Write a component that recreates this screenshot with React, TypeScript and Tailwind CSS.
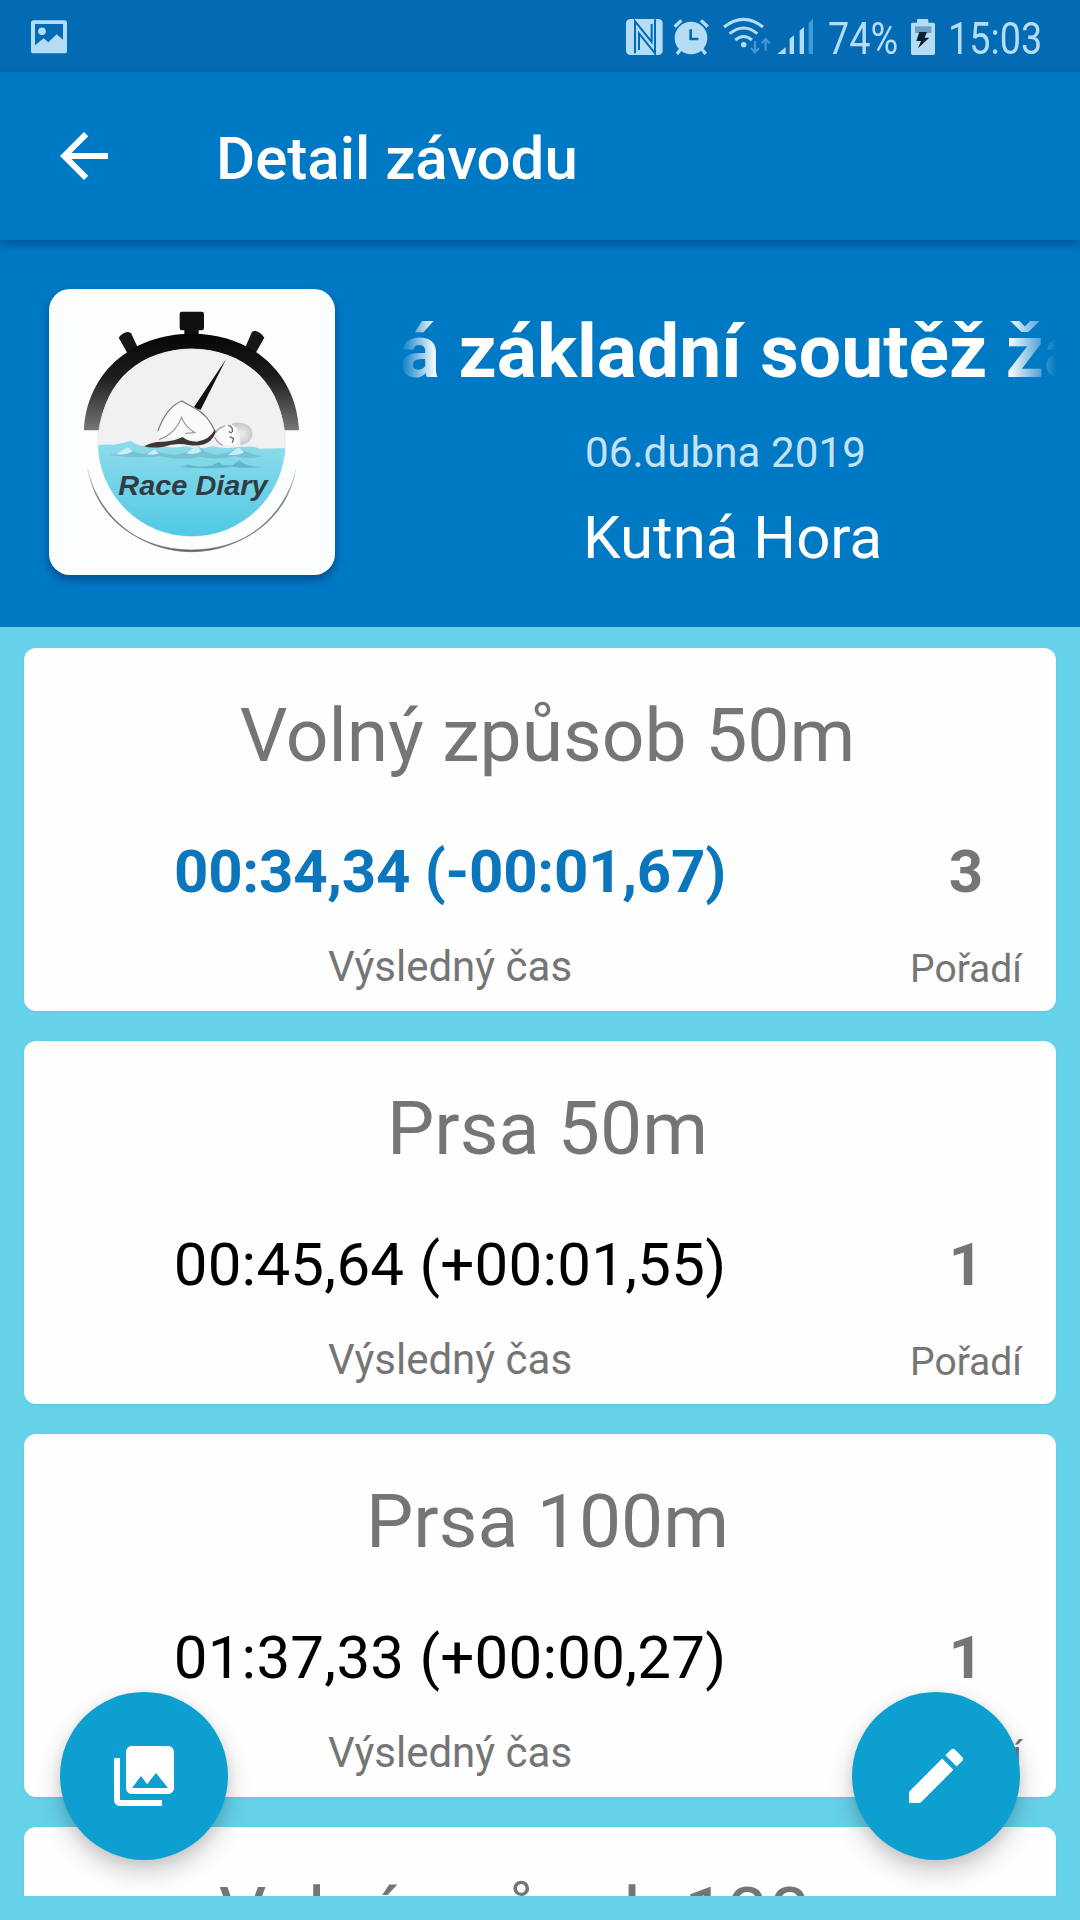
import type { ReactNode } from 'react'
import clsx from 'clsx'

type Result = {
  discipline: string
  time: string
  place: string
  best?: boolean
}

const results: Result[] = [
  { discipline: 'Volný způsob 50m', time: '00:34,34 (-00:01,67)', place: '3', best: true },
  { discipline: 'Prsa 50m', time: '00:45,64 (+00:01,55)', place: '1' },
  { discipline: 'Prsa 100m', time: '01:37,33 (+00:00,27)', place: '1' },
  { discipline: 'Volný způsob 100m', time: '01:18,52 (+00:00,84)', place: '2' },
]

const StatusBar = () => {
  return (
    <div className="flex h-[72px] items-start bg-[#036bb3] text-[#b5dcf5]">
      <svg className="mt-5 ml-[31px] h-[34px] w-9 shrink-0" viewBox="93 60 108 100" fill="currentColor">
        <path fillRule="evenodd" d="M101 60h92q8 0 8 8v83q0 8-8 8h-92q-8 0-8-8V68q0-8 8-8zM105 71v64l26-21 14 12 25-24 19 16V71z" />
        <circle cx="126" cy="93" r="11.5" />
      </svg>

      <svg className="mt-4 ml-[553px] h-10 w-[198px] shrink-0" viewBox="60 48 594 120" fill="currentColor">
        {/* NFC */}
        <rect x="78" y="57" width="110" height="108" rx="13" />
        <path d="M105 160V64l50 62V72M117 150V100l48 60V58" stroke="#036bb3" strokeWidth="6" fill="none" />
        {/* alarm */}
        <circle cx="273" cy="114" r="49" />
        <path d="M224 80l20-19M303 61l20 19M242 148l-11 14M306 148l11 14" stroke="currentColor" strokeWidth="10" fill="none" />
        <path d="M272 88v29h23" stroke="#036bb3" strokeWidth="8" fill="none" />
        {/* wifi */}
        <g fill="none" stroke="currentColor" strokeWidth="9">
          <path d="M372 81q59-46 117 0" />
          <path d="M389 101q42-34 83 0" />
          <path d="M406 120q25-21 50 0" />
        </g>
        <circle cx="431" cy="134" r="8" />
        <path d="M465 122v34m-12-12 12 13 12-13M497 152v-34m-12 12 12-13 12 13" stroke="#4095d2" strokeWidth="7" fill="none" />
        {/* signal */}
        <path d="M532 162l25-20v20zM569 116l13-10v56h-13zM599 92l13-11v81h-13z" />
        <path d="M626 69l13-13v106h-13z" fill="#3e9cd5" />
      </svg>

      <div className="mt-3 ml-[10px] w-[77px] shrink-0 text-[45px] leading-[54px]">
        <span className="inline-block origin-left scale-x-[0.84]">74%</span>
      </div>
      <svg className="mt-[19px] ml-[5px] h-9 w-[26px] shrink-0" viewBox="931 57 76 108" fill="currentColor">
        <path d="M937 68h14V60q0-3 4-3h26q4 0 4 3v8h15q5 0 5 5v87q0 5-5 5h-63q-4 0-4-5V73q0-5 4-5z" />
        <path d="M945 79h49v20h-49z" fill="#6f9fc4" />
        <path d="M958 96l-9 27h14l-9 22 34-32h-14l7-17z" fill="#0b1f33" />
      </svg>
      <div className="mt-3 ml-3 w-24 text-[45px] leading-[54px]">
        <span className="inline-block origin-left scale-x-[0.84]">15:03</span>
      </div>
    </div>
  )
}

const Toolbar = () => {
  return (
    <div className="relative flex h-[168px] items-center bg-[#0079c4] text-white shadow-[0_4px_10px_rgba(0,40,110,0.5)]">
      <svg className="ml-12 size-[72px]" viewBox="0 0 24 24" fill="currentColor">
        <path d="M20 11H7.83l5.59-5.59L12 4l-8 8 8 8 1.41-1.41L7.83 13H20v-2z" />
      </svg>
      <h1 className="ml-24 pt-[5px] text-[60px] leading-[72px] font-medium">Detail závodu</h1>
    </div>
  )
}

const Logo = () => {
  return (
    <div className="size-[286px] shrink-0 overflow-hidden rounded-[21px] bg-[#fcfdfd] shadow-[0_5px_8px_rgba(0,30,80,0.45)]">
      <svg className="size-full" viewBox="58 57 858 858">
        <defs>
          <linearGradient id="rim" x1="0" y1="0" x2="0" y2="1">
            <stop offset="0" stopColor="#050505" />
            <stop offset=".45" stopColor="#1d1d1f" />
            <stop offset="1" stopColor="#77777a" />
          </linearGradient>
          <linearGradient id="water" x1="0" y1="0" x2="0" y2="1">
            <stop offset="0" stopColor="#8fdcea" />
            <stop offset="1" stopColor="#4cc8e4" />
          </linearGradient>
          <linearGradient id="ring" x1="0" y1="0" x2="0" y2="1">
            <stop offset="0" stopColor="#aaa" stopOpacity=".2" />
            <stop offset=".35" stopColor="#777" />
            <stop offset="1" stopColor="#666" />
          </linearGradient>
          <radialGradient id="cap">
            <stop offset="0" stopColor="#ececee" />
            <stop offset="1" stopColor="#c9c9cb" />
          </radialGradient>
          <clipPath id="dial">
            <circle cx="486" cy="518" r="281" />
          </clipPath>
        </defs>

        {/* buttons */}
        <path d="M456 125h60q7 0 7 7v42q0 7-7 7h-9v22h-43v-22h-7q-7 0-7-7v-42q0-7 6-7z" fill="#111" />
        <path d="M267 203q10-15 28-17l9 3 20 43-28 22zM704 203q-10-17-28-21l-9 3-20 47 28 22z" fill="#161617" />
        {/* rim */}
        <path d="M163 481C170 315 300 191 486 191S801 315 808 481H764C748 330 635 236 486 236S224 330 210 481z" fill="url(#rim)" />
        <path d="M174 597C205 742 335 845 486 845S768 742 799 597C771 750 640 840 486 840S202 750 174 597z" fill="url(#ring)" stroke="url(#ring)" strokeWidth="2" />

        <circle cx="486" cy="518" r="281" fill="#f1f1f3" stroke="#e2e2e4" strokeWidth="2" />
        <g clipPath="url(#dial)">
          <path d="M200 526q30-4 52-2 28-4 50-12 22 14 40 16 30-10 46-4 40 14 80 4 40 14 80 0 34 10 70 4 60-6 70 4 50-2 90-1v280H200z" fill="url(#water)" />
          <path d="M238 556q34-4 57-24 14 18 50 20 20-12 30-14 26 18 62 16 40-4 66-28 26 28 60 28 34-2 64-22 24 20 72 26-40 12-84 0-50 14-104 2-50 14-120-2-60 8-153-2z" fill="#6fb9cc" opacity=".75" />
          <path d="M295 532l-36 21q30 4 50-9zM503 526l-34 24q30 6 46-6zM627 532l-32 22q34 4 48-8zM375 538l-25 15q25 4 38-3z" fill="#c9eef5" />
          <path d="M448 590q18 2 28-7 14 10 70 4l20-11q20 15 44 9l18-14q22 19 66 20-50 6-84-1-70 9-162 0z" fill="#55a9bf" opacity=".7" />
        </g>
        {/* hand */}
        <path d="M590 266L493 411q10 8 20 8z" fill="#111" />
        {/* swimmer */}
        <path d="M385 497q24-75 72-104 65 25 100 91l-18 29-82-4-45-8z" fill="#fafafa" />
        <g fill="none" stroke="#777" strokeWidth="3.5" strokeLinecap="round">
          <path d="M385 482q25-70 71-89l37 20q44 22 63 72" />
          <path d="M390 508q45-15 66-66 8 26 40 46l-28 2" stroke="#999" />
          <path d="M558 488q9-15 27-20M556 503q8 16 22 22" stroke="#999" />
        </g>
        <path d="M556 478q6 14-14 34-22 18-62 14-40-10-78 4-40 6-58-1 20-15 60-14 30-2 55-14 16 14 42 14 38-4 55-37z" fill="#3c3634" />
        <path d="M566 488q6-14 26-20l28 2 4 55h-42q-16-14-16-37z" fill="#fafafa" />
        <path d="M604 462q12-5 26-4 40 4 38 37-4 28-36 30 2-34-8-50z" fill="url(#cap)" />
        <path d="M596 466q15 4 12 20M597 485l10 4M600 500l12 6-4 12" stroke="#666" strokeWidth="4" fill="none" />

        <text
          x="266"
          y="674"
          textLength="448"
          lengthAdjust="spacingAndGlyphs"
          className="font-['Liberation_Sans',sans-serif] text-[84px] font-bold italic"
          fill="#303b43"
        >
          Race Diary
        </text>
      </svg>
    </div>
  )
}

const RaceHeader = () => {
  return (
    <div className="flex h-[387px] bg-[#0079c4] pt-[49px] pl-[49px] text-white">
      <Logo />
      <div className="ml-[65px] w-[656px] pt-[17px]">
        {/* marquee title, faded on both edges */}
        <div className="flex h-[90px] justify-center overflow-hidden mask-[linear-gradient(to_right,transparent,black_36px,black_608px,transparent)] pl-7">
          <h2 className="text-[75px] leading-[90px] font-bold whitespace-nowrap">á základní soutěž žá</h2>
        </div>
        <p className="mt-8 pl-[185px] text-[42px] leading-[50px] tracking-[0.1px] text-[#c5e3f7]">06.dubna 2019</p>
        <p className="mt-6 pl-[183px] text-[60px] leading-[72px]">Kutná Hora</p>
      </div>
    </div>
  )
}

const ResultCard = ({ discipline, time, place, best }: Result) => {
  return (
    <div className="h-[363px] shrink-0 rounded-xl bg-[#fefefe] pt-[42px] text-center text-[#757575] shadow-[0_1px_2px_rgba(0,60,90,0.08)]">
      <h3 className="pl-[15px] text-[75px] leading-[90px]">{discipline}</h3>
      <div className="mt-14 grid grid-cols-[852px_180px]">
        <div>
          <p
            className={clsx(
              'text-[60px] leading-[72px]',
              best ? 'font-bold tracking-[-0.25px] text-[#0b76bb]' : 'tracking-[0.25px] text-black',
            )}
          >
            {time}
          </p>
          <p className="mt-[35px] text-[42px] leading-[48px]">Výsledný čas</p>
        </div>
        <div>
          <p className="text-[60px] leading-[72px] font-bold">{place}</p>
          <p className="mt-[37px] text-[39px] leading-[48px]">Pořadí</p>
        </div>
      </div>
    </div>
  )
}

const Fab = ({ className, children }: { className: string; children: ReactNode }) => {
  return (
    <button
      className={clsx(
        'absolute top-[1692px] flex size-[168px] items-center justify-center rounded-full bg-[#0c9fd0] text-white shadow-[0_12px_24px_rgba(0,0,0,0.2),0_2px_12px_rgba(0,0,0,0.08)]',
        className,
      )}
    >
      <svg className="size-[72px]" viewBox="0 0 24 24" fill="currentColor">
        {children}
      </svg>
    </button>
  )
}

export default function App() {
  return (
    <div className="relative h-[1920px] w-[1080px] overflow-hidden bg-[#66d2ea] font-[Roboto,sans-serif]">
      <StatusBar />
      <Toolbar />
      <RaceHeader />
      <main className="flex h-[1269px] flex-col gap-[30px] overflow-hidden px-6 pt-[21px]">
        {results.map((result) => (
          <ResultCard key={result.discipline} {...result} />
        ))}
      </main>

      <Fab className="left-[60px]">
        <path
          fillRule="evenodd"
          d="M22 16V4c0-1.100-.9-2-2-2H8c-1.100 0-2 .9-2 2v12c0 1.100.9 2 2 2h12c1.100 0 2-.9 2-2zM11 12l2.030 2.710L16 11l4 5H8l3-4zM2 6v14c0 1.100.9 2 2 2h14v-2H4V6H2z"
        />
      </Fab>
      <Fab className="left-[852px]">
        <path d="M3 17.250V21h3.750L17.810 9.940l-3.750-3.750L3 17.250zM20.710 7.040a1 1 0 0 0 0-1.410l-2.340-2.340a1 1 0 0 0-1.410 0l-1.830 1.830 3.750 3.750 1.830-1.830z" />
      </Fab>
    </div>
  )
}
